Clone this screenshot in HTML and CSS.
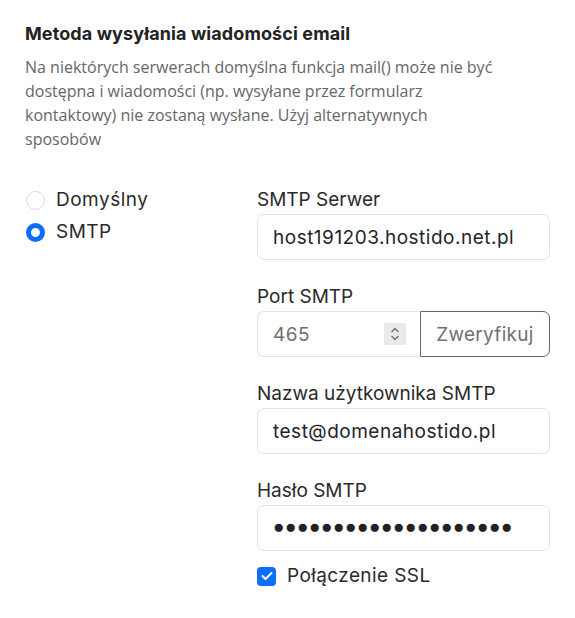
FILE: index.html
```html
<!DOCTYPE html>
<html lang="pl">
<head>
<meta charset="utf-8">
<title>Metoda wysyłania wiadomości email</title>
<link rel="stylesheet" href="styles.css">
</head>
<body>
<section class="card">
  <h2 class="title">Metoda wysyłania wiadomości email</h2>
  <p class="desc">Na niektórych serwerach domyślna funkcja mail() może nie być dostępna i wiadomości (np. wysyłane przez formularz kontaktowy) nie zostaną wysłane. Użyj alternatywnych sposobów</p>
  <div class="grid">
    <div class="methods">
      <label class="radio-row"><span class="radio"></span><span>Domyślny</span></label>
      <label class="radio-row"><span class="radio checked"></span><span>SMTP</span></label>
    </div>
    <div class="fields">
      <div class="field">
        <div class="label">SMTP Serwer</div>
        <div class="input">host191203.hostido.net.pl</div>
      </div>
      <div class="field">
        <div class="label">Port SMTP</div>
        <div class="group">
          <div class="input num"><span class="muted">465</span>
            <span class="spin"><svg width="12" height="16" viewBox="0 0 12 16"><path d="M2.5 6 L6 2.5 L9.5 6" fill="none" stroke="#6e6e6e" stroke-width="1.3"/><path d="M2.5 10 L6 13.5 L9.5 10" fill="none" stroke="#6e6e6e" stroke-width="1.3"/></svg></span>
          </div>
          <div class="btn">Zweryfikuj</div>
        </div>
      </div>
      <div class="field">
        <div class="label">Nazwa użytkownika SMTP</div>
        <div class="input">test@domenahostido.pl</div>
      </div>
      <div class="field">
        <div class="label">Hasło SMTP</div>
        <div class="input"><span class="dots">●●●●●●●●●●●●●●●●●●●●</span></div>
      </div>
      <label class="check-row"><span class="check"><svg width="12" height="10" viewBox="0 0 12 10"><path d="M1.5 5 L4.5 8 L10.5 2" fill="none" stroke="#fff" stroke-width="2" stroke-linecap="round" stroke-linejoin="round"/></svg></span><span>Połączenie SSL</span></label>
    </div>
  </div>
</section>
</body>
</html>
```
FILE: styles.css
```css
* { box-sizing: border-box; }
body {
  margin: 0;
  background: #fff;
  font-family: Inter, "DejaVu Sans", sans-serif;
  color: #212529;
}
.card {
  padding: 22px 25px 20px 25px;
}
.title {
  margin: 0;
  font-size: 18px;
  font-weight: 700;
  line-height: 24px;
  letter-spacing: 0.1px;
  color: #222;
}
.desc {
  margin: 9px 0 0 0;
  font-family: "Open Sans", sans-serif;
  font-size: 16px;
  line-height: 24px;
  color: #666;
  max-width: 476px;
}
.grid {
  display: grid;
  grid-template-columns: 232px minmax(0, 1fr);
  margin-top: 37px;
}
.methods {
  display: flex;
  flex-direction: column;
  gap: 8px;
}
.radio-row {
  display: flex;
  align-items: center;
  gap: 11px;
  font-size: 19px;
  letter-spacing: 0.5px;
  line-height: 24px;
  padding-left: 1px;
  color: #2a2a2a;
}
.radio {
  width: 19px;
  height: 19px;
  border-radius: 50%;
  border: 1px solid #dcdcdc;
  background: #fff;
  flex: none;
}
.radio.checked {
  border: 5.5px solid #0d6efd;
}
.fields {
  display: flex;
  flex-direction: column;
  min-width: 0;
}
.field { margin-bottom: 25px; }
.label {
  font-size: 19px;
  line-height: 24px;
  margin-bottom: 2px;
  color: #2a2a2a;
}
.input {
  height: 46px;
  border: 1px solid #e3e3e3;
  border-radius: 7px;
  padding: 0 15px;
  display: flex;
  align-items: center;
  font-size: 19px;
  letter-spacing: 0.5px;
  min-width: 0;
}
.dots {
  font-family: "Liberation Mono", monospace;
  font-size: 19px;
  letter-spacing: 0.6px;
  color: #222;
}
.group { display: flex; }
.num {
  width: 163px;
  flex: none;
  border-radius: 7px 0 0 7px;
  border-right: none;
  justify-content: space-between;
  padding-right: 14px;
}
.muted { color: #707070; }
.spin {
  width: 22px;
  height: 22px;
  background: #e9e9ec;
  display: flex;
  align-items: center;
  justify-content: center;
}
.btn {
  flex: 1;
  height: 46px;
  border: 1px solid #666;
  border-radius: 0 7px 7px 0;
  display: flex;
  align-items: center;
  justify-content: center;
  font-size: 19px;
  letter-spacing: 0.3px;
  color: #707070;
}
.check-row {
  display: flex;
  align-items: center;
  gap: 11px;
  font-size: 19px;
  letter-spacing: 0.4px;
  line-height: 24px;
  margin-top: -12px;
  color: #2a2a2a;
}
.check {
  width: 19px;
  height: 19px;
  border-radius: 4px;
  background: #0d6efd;
  display: flex;
  align-items: center;
  justify-content: center;
}
```
